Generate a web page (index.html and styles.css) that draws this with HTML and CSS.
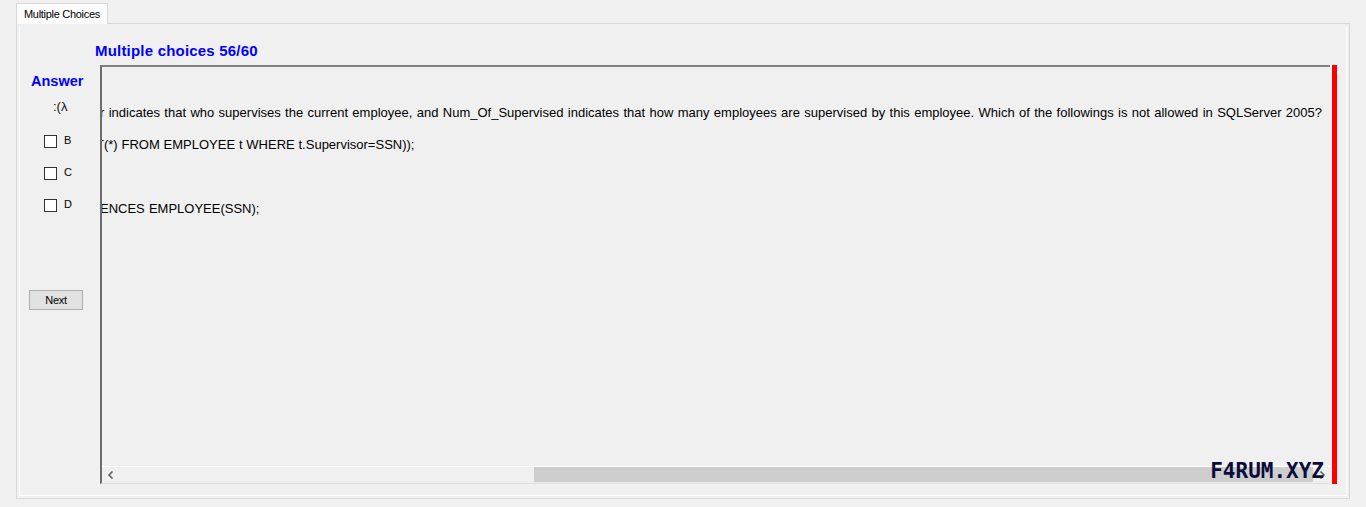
FILE: index.html
```html
<!DOCTYPE html>
<html>
<head>
<meta charset="utf-8">
<link rel="stylesheet" href="styles.css">
</head>
<body>
<div class="window">
  <div class="tabstrip">
    <div class="tab">Multiple Choices</div>
  </div>
  <div class="panel">
    <div class="panel-inner">
      <div class="sidebar">
        <div class="answer-title">Answer</div>
        <div class="answer-a">:(λ</div>
        <label class="option"><span class="checkbox"></span><span class="opt-label">B</span></label>
        <label class="option"><span class="checkbox"></span><span class="opt-label">C</span></label>
        <label class="option"><span class="checkbox"></span><span class="opt-label">D</span></label>
        <button class="next-btn">Next</button>
      </div>
      <div class="main">
        <div class="title">Multiple choices 56/60</div>
        <div class="question-row">
          <div class="question-box">
            <div class="question-text">
              <div class="q-line q-line-1">r indicates that who supervises the current employee, and Num_Of_Supervised indicates that how many employees are supervised by this employee. Which of the followings is not allowed in SQLServer 2005?</div>
              <div class="q-line q-line-2">T(*) FROM EMPLOYEE t WHERE t.Supervisor=SSN));</div>
              <div class="q-line q-line-blank">&nbsp;</div>
              <div class="q-line q-line-3">ENCES EMPLOYEE(SSN);</div>
            </div>
            <div class="hscroll">
              <span class="arrow arrow-left"><svg width="8" height="8" viewBox="0 0 8 8"><path d="M5.5 0.5 L2 4 L5.5 7.5" fill="none" stroke="#606060" stroke-width="1.6"/></svg></span>
              <div class="track"><div class="thumb"></div></div>
              <span class="arrow arrow-right"><svg width="8" height="8" viewBox="0 0 8 8"><path d="M2.5 0.5 L6 4 L2.5 7.5" fill="none" stroke="#606060" stroke-width="1.6"/></svg></span>
            </div>
            <div class="watermark">F4RUM.XYZ</div>
          </div>
          <div class="red-bar"></div>
        </div>
      </div>
    </div>
  </div>
</div>
</body>
</html>
```
FILE: styles.css
```css
html, body {
  margin: 0;
  padding: 0;
  background: #f0f0f0;
  font-family: "Liberation Sans", Arial, sans-serif;
  color: #000;
}

.window {
  width: 1366px;
  height: 507px;
  padding-top: 3px;
  box-sizing: border-box;
}

.tabstrip {
  display: flex;
  padding-left: 16px;
  height: 20px;
  position: relative;
  z-index: 2;
}

.tab {
  width: 92px;
  height: 21px;
  box-sizing: border-box;
  border: 1px solid #d9d9d9;
  border-bottom: none;
  background: #fcfcfc;
  font-size: 11px;
  letter-spacing: -0.3px;
  padding: 4px 0 0 7px;
  line-height: 13px;
}

.panel {
  margin-left: 16px;
  width: 1334px;
  height: 476px;
  box-sizing: border-box;
  border: 1px solid #d9d9d9;
  padding: 2px;
}

.panel-inner {
  height: 100%;
  box-sizing: border-box;
  border: 1px solid #fff;
  border-top-color: #f0f0f0;
  display: grid;
  grid-template-columns: 80px 1fr;
}

.sidebar {
  display: flex;
  flex-direction: column;
  padding-top: 46px;
}

.answer-title {
  color: #0000ff;
  font-weight: bold;
  font-size: 14.5px;
  line-height: 17px;
  padding-left: 11px;
}

.answer-a {
  font-size: 13px;
  line-height: 14px;
  margin-top: 10px;
  padding-left: 33px;
  color: #111;
}

.option {
  display: flex;
  align-items: center;
  gap: 7px;
  padding-left: 24px;
  height: 13px;
  margin-top: 19px;
}

.answer-a + .option {
  margin-top: 21px;
}

.checkbox {
  width: 13px;
  height: 13px;
  box-sizing: border-box;
  border: 1px solid #333;
  background: #fff;
}

.opt-label {
  font-size: 11px;
  line-height: 13px;
  position: relative;
  top: -1px;
}

.next-btn {
  margin-top: 78px;
  margin-left: 9px;
  width: 54px;
  height: 20px;
  box-sizing: border-box;
  border: 1px solid #adadad;
  background: #e1e1e1;
  font-family: "Liberation Sans", Arial, sans-serif;
  font-size: 11px;
  letter-spacing: -0.3px;
  color: #000;
  padding: 0;
}

.main {
  display: flex;
  flex-direction: column;
  padding-top: 15px;
}

.title {
  color: #0000ff;
  font-weight: bold;
  font-size: 15px;
  letter-spacing: 0.2px;
  line-height: 17px;
  padding-left: 95px;
  margin-left: -100px;
  height: 23px;
}

.question-row {
  display: flex;
  gap: 2px;
  height: 419px;
}

.question-box {
  width: 1230px;
  box-sizing: border-box;
  border-left: 2px solid #6d6d6d;
  border-top: 2px solid #808080;
  border-bottom: 1px solid #dcdcdc;
  display: flex;
  flex-direction: column;
  position: relative;
}

.question-text {
  flex: 1;
  overflow: hidden;
  padding-top: 30px;
  font-size: 13px;
  line-height: 32px;
  color: #000;
}

.q-line {
  white-space: nowrap;
}

.q-line-1 { margin-left: -2px; word-spacing: 0.75px; }
.q-line-2 { margin-left: -6px; word-spacing: 0.2px; }
.q-line-3 { margin-left: -2px; word-spacing: 0.5px; }

.hscroll {
  height: 16px;
  border-top: 1px solid #fff;
  display: flex;
  align-items: stretch;
  background: #f0f0f0;
}

.arrow {
  width: 17px;
  display: flex;
  align-items: center;
  justify-content: center;
}

.track {
  flex: 1;
  display: flex;
  padding-left: 415px;
  padding-right: 0;
}

.thumb {
  flex: 1;
  background: #cdcdcd;
  margin-bottom: 1px;
}

.watermark {
  position: absolute;
  right: 6px;
  bottom: 1px;
  font-family: "DejaVu Sans Mono", monospace;
  font-weight: bold;
  font-size: 21px;
  line-height: 22px;
  color: #0c0c3a;
}

.red-bar {
  width: 5px;
  background: #ff0000;
  height: 419px;
}
```
